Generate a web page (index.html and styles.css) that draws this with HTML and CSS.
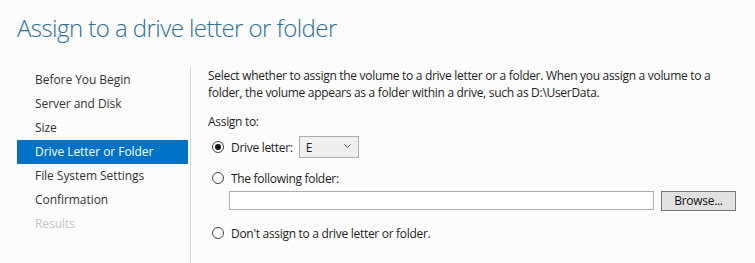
FILE: index.html
```html
<!DOCTYPE html>
<html>
<head>
<meta charset="utf-8">
<link rel="stylesheet" href="styles.css">
</head>
<body>
<h1 class="title">Assign to a drive letter or folder</h1>
<div class="main">
  <nav class="steps">
    <div class="step">Before You Begin</div>
    <div class="step">Server and Disk</div>
    <div class="step">Size</div>
    <div class="step active">Drive Letter or Folder</div>
    <div class="step">File System Settings</div>
    <div class="step">Confirmation</div>
    <div class="step disabled">Results</div>
  </nav>
  <section class="content">
    <p class="desc">Select whether to assign the volume to a drive letter or a folder. When you assign a volume to a folder, the volume appears as a folder within a drive, such as D:\UserData.</p>
    <div class="label">Assign to:</div>
    <div class="opt opt1">
      <span class="radio checked"></span>
      <span class="opt-text">Drive letter:</span>
      <span class="select"><span>E</span>
        <svg class="chev" width="7" height="4" viewBox="0 0 7 4"><path d="M0.5 0.5 L3.5 3.5 L6.5 0.5" fill="none" stroke="#555" stroke-width="1"/></svg>
      </span>
    </div>
    <div class="opt opt2">
      <span class="radio"></span>
      <span class="opt-text">The following folder:</span>
    </div>
    <div class="folder-row">
      <span class="textbox"></span>
      <span class="button">Browse...</span>
    </div>
    <div class="opt opt3">
      <span class="radio"></span>
      <span class="opt-text">Don't assign to a drive letter or folder.</span>
    </div>
  </section>
</div>
</body>
</html>
```
FILE: styles.css
```css
html, body {
  margin: 0;
  padding: 0;
  background: #fcfcfc;
  width: 755px;
  height: 263px;
  overflow: hidden;
  font-family: "Open Sans", "Noto Sans", sans-serif;
  font-size: 12px;
  color: #1e1e1e;
}
.title {
  margin: 0;
  padding: 11px 0 0 17px;
  height: 58px;
  box-sizing: border-box;
  font-weight: 300;
  font-size: 24px;
  line-height: 34px;
  color: #2b6f96;
  letter-spacing: -0.55px;
}
.main {
  display: flex;
  height: 196px;
  margin-top: 9px;
}
.steps {
  width: 173px;
  padding-left: 17px;
  padding-top: 1px;
  border-right: 1px solid #d6d6d6;
  flex-shrink: 0;
}
.step {
  height: 24px;
  line-height: 24px;
  padding-left: 18px;
  margin-right: 2px;
  color: #333;
  white-space: nowrap;
  letter-spacing: -0.05px;
}
.step.active {
  background: #0072c6;
  color: #fff;
}
.step.disabled {
  color: #c2c2c2;
}
.content {
  padding-left: 17px;
  flex: 1;
  letter-spacing: -0.3px;
}
.desc {
  margin: 0;
  line-height: 17px;
  width: 530px;
}
.label {
  margin-top: 12px;
  line-height: 17px;
}
.opt {
  display: flex;
  align-items: center;
  padding-left: 4px;
}
.opt1 {
  margin-top: 6px;
  height: 22px;
}
.opt2 {
  margin-top: 11px;
  height: 18px;
}
.opt3 {
  margin-top: 13px;
  height: 18px;
}
.radio {
  width: 10px;
  height: 10px;
  border: 1px solid #444;
  border-radius: 50%;
  background: #fff;
  box-sizing: content-box;
  display: flex;
  align-items: center;
  justify-content: center;
  margin-right: 7px;
}
.radio.checked::after {
  content: "";
  width: 6px;
  height: 6px;
  border-radius: 50%;
  background: #111;
}
.opt-text {
  white-space: nowrap;
}
.select {
  margin-left: 6px;
  border: 1px solid #acacac;
  background: #efefef;
  display: flex;
  align-items: center;
  justify-content: space-between;
  padding: 0 7px 0 6px;
  box-sizing: border-box;
  width: 60px;
  height: 22px;
}
.chev {
  margin-top: -3px;
}
.folder-row {
  display: flex;
  align-items: flex-start;
  margin-top: 4px;
  padding-left: 21px;
}
.textbox {
  width: 425px;
  height: 19px;
  border: 1px solid #adadad;
  background: #fff;
  box-sizing: border-box;
}
.button {
  margin-left: 7px;
  width: 75px;
  height: 20px;
  border: 1px solid #7a7a7a;
  background: #e1e1e1;
  box-sizing: border-box;
  text-align: center;
  line-height: 18px;
  color: #111;
}
```
